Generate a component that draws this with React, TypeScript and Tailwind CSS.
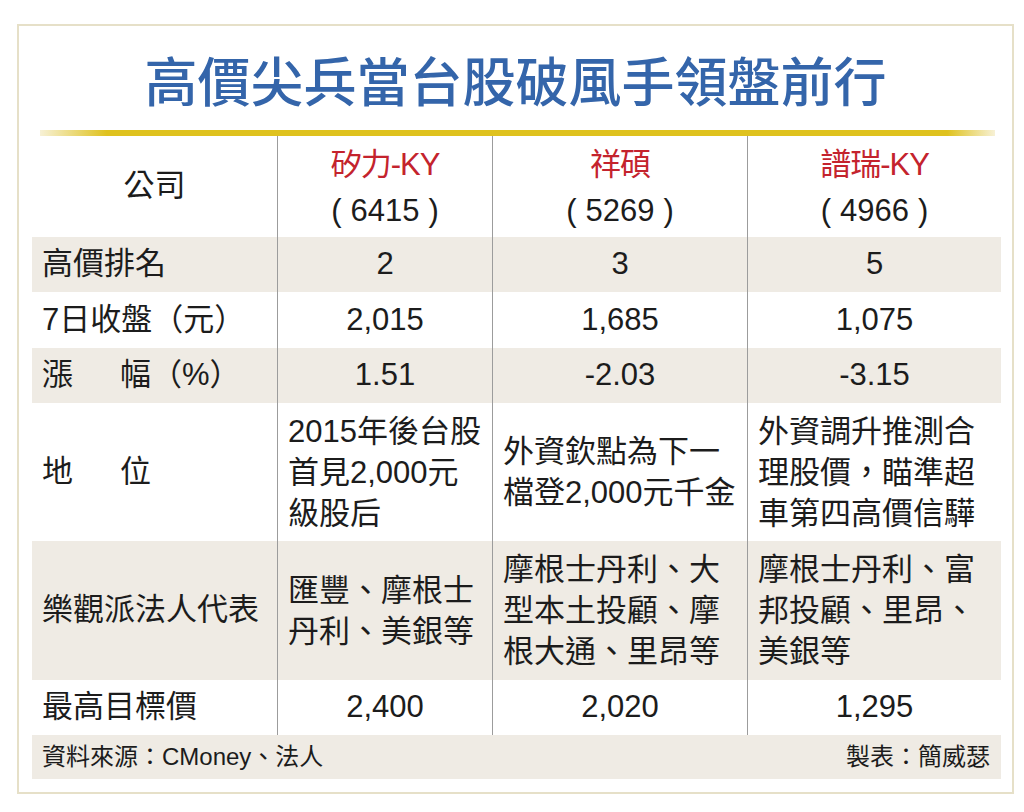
import React from "react";

const rowCls = "grid grid-cols-[245px_215px_255px_254px]";
const cellC = "flex items-center justify-center border-l border-[#9c9c9c]";
const cellL = "flex items-center border-l border-[#9c9c9c] pl-[10px] leading-[41px]";

function Simple({ label, vals, bg, h }: { label: React.ReactNode; vals: string[]; bg: string; h: string }) {
  return (
    <div className={`${rowCls} ${bg} ${h}`}>
      <div className="flex items-center pl-[10px]">{label}</div>
      {vals.map((v, i) => (
        <div key={i} className={cellC}>{v}</div>
      ))}
    </div>
  );
}

export default function App() {
  return (
    <div className="w-[1024px] h-[812px] bg-white pt-[24px] pl-[17px] font-[family-name:'Liberation_Sans','Noto_Sans_CJK_TC',sans-serif] text-[#1c1c1c]">
      <div className="w-[997px] h-[770px] border-2 border-[#e6e0c8] bg-white">
        <div className="h-[104px] flex items-center justify-center">
          <h1 className="text-[53px] leading-none font-medium text-[#3465aa] font-[family-name:'Noto_Sans_CJK_TC',sans-serif] pt-[2px]">
            高價尖兵當台股破風手領盤前行
          </h1>
        </div>
        <div className="ml-[21px] mr-[17px] h-[6px] bg-[linear-gradient(to_right,#f7f1d6_0%,#dfc21e_7%,#dfc21e_95%,#f7f1d6_100%)]" />
        <div className="ml-[13px] mr-[11px] text-[31px]">
          <div className={`${rowCls} h-[101px] bg-white`}>
            <div className="flex items-center justify-center">公司</div>
            {[
              ["矽力-KY", "6415"],
              ["祥碩", "5269"],
              ["譜瑞-KY", "4966"],
            ].map(([n, c]) => (
              <div key={c} className={`${cellC} flex-col leading-[46px] pt-[2px]`}>
                <div className="text-[#c4232d] tracking-[-1px]">{n}</div>
                <div className="text-[31px]">
                  (<span className="mx-[9px]">{c}</span>)
                </div>
              </div>
            ))}
          </div>
          <Simple label="高價排名" vals={["2", "3", "5"]} bg="bg-[#efebe4]" h="h-[55px]" />
          <Simple label="7日收盤（元）" vals={["2,015", "1,685", "1,075"]} bg="bg-white" h="h-[56px]" />
          <Simple
            label={
              <>
                <span className="inline-block w-[78px]">漲</span>幅（%）
              </>
            }
            vals={["1.51", "-2.03", "-3.15"]}
            bg="bg-[#efebe4]"
            h="h-[55px]"
          />
          <div className={`${rowCls} h-[138px] bg-white`}>
            <div className="flex items-center pl-[10px]">
              <span className="inline-block w-[78px]">地</span>位
            </div>
            <div className={cellL}>
              <div>
                2015年後台股
                <br />
                首見2,000元
                <br />
                級股后
              </div>
            </div>
            <div className={cellL}>
              <div>
                外資欽點為下一
                <br />
                檔登2,000元千金
              </div>
            </div>
            <div className={cellL}>
              <div>
                外資調升推測合
                <br />
                理股價，瞄準超
                <br />
                車第四高價信驊
              </div>
            </div>
          </div>
          <div className={`${rowCls} h-[139px] bg-[#efebe4]`}>
            <div className="flex items-center pl-[10px]">樂觀派法人代表</div>
            <div className={cellL}>
              <div>
                匯豐、摩根士
                <br />
                丹利、美銀等
              </div>
            </div>
            <div className={cellL}>
              <div>
                摩根士丹利、大
                <br />
                型本土投顧、摩
                <br />
                根大通、里昂等
              </div>
            </div>
            <div className={cellL}>
              <div>
                摩根士丹利、富
                <br />
                邦投顧、里昂、
                <br />
                美銀等
              </div>
            </div>
          </div>
          <Simple label="最高目標價" vals={["2,400", "2,020", "1,295"]} bg="bg-white" h="h-[55px]" />
          <div className="h-[44px] bg-[#efebe4] flex items-center justify-between pl-[10px] pr-[11px] text-[24px]">
            <span>資料來源：CMoney、法人</span>
            <span>製表：簡威瑟</span>
          </div>
        </div>
      </div>
    </div>
  );
}
